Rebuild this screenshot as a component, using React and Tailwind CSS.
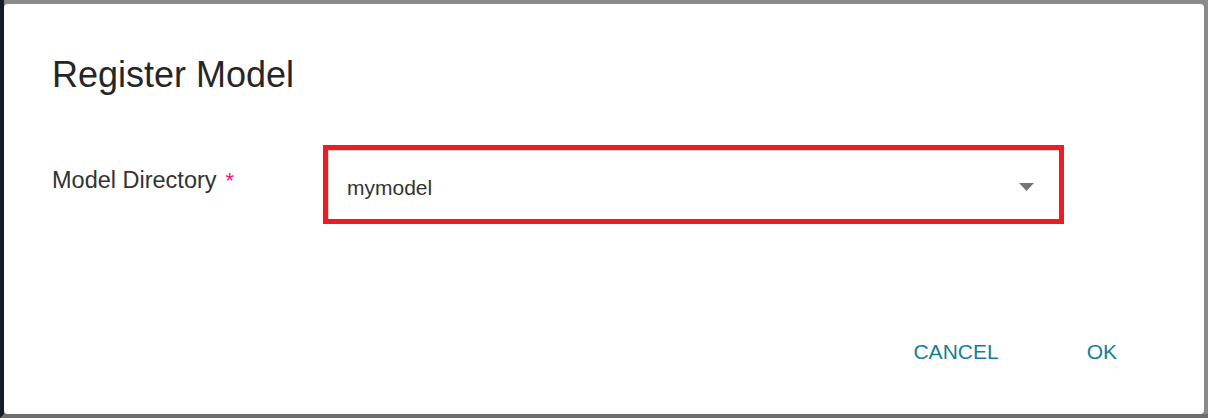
export default function App() {
  const font = { fontFamily: '"Liberation Sans", Arial, sans-serif' };
  return (
    <div
      className="w-[1208px] h-[418px] bg-[#8a8a8a] border-l-[4px] border-l-[#0f1e28] border-b-[4px] border-b-[#6e6e6e] pt-[4px] pr-[4px] flex"
      style={font}
    >
      <div className="flex-1 bg-white rounded-[4px] flex flex-col pl-[48px] pt-[53px]">
        <h1 className="text-[36px] leading-none text-[#262626] font-normal">Register Model</h1>
        <div className="flex items-start mt-[52px]">
          <div className="w-[271px] mt-[24px] text-[23.5px] leading-none text-[#333333] whitespace-nowrap">
            Model Directory<span className="text-[#ec1a72] text-[22px] ml-[9px]">*</span>
          </div>
          <div className="w-[741px] h-[79px] border-[5px] border-[#ec1c24] flex">
            <div className="flex-1 border-t border-l border-[#d2d2d2] flex items-center justify-between pl-[18px] pr-[25px] pt-[4px]">
              <span className="text-[21px] leading-none text-[#333333]">mymodel</span>
              <svg width="15" height="8" viewBox="0 0 15 8" className="mt-[-1px]">
                <path d="M0 0 H15 L7.5 8 Z" fill="#757575" />
              </svg>
            </div>
          </div>
        </div>
        <div className="flex justify-end gap-[88px] pr-[87px] mt-[117px]">
          <button className="text-[21px] leading-none text-[#137f98] uppercase">Cancel</button>
          <button className="text-[21px] leading-none text-[#137f98] uppercase">OK</button>
        </div>
      </div>
    </div>
  );
}
